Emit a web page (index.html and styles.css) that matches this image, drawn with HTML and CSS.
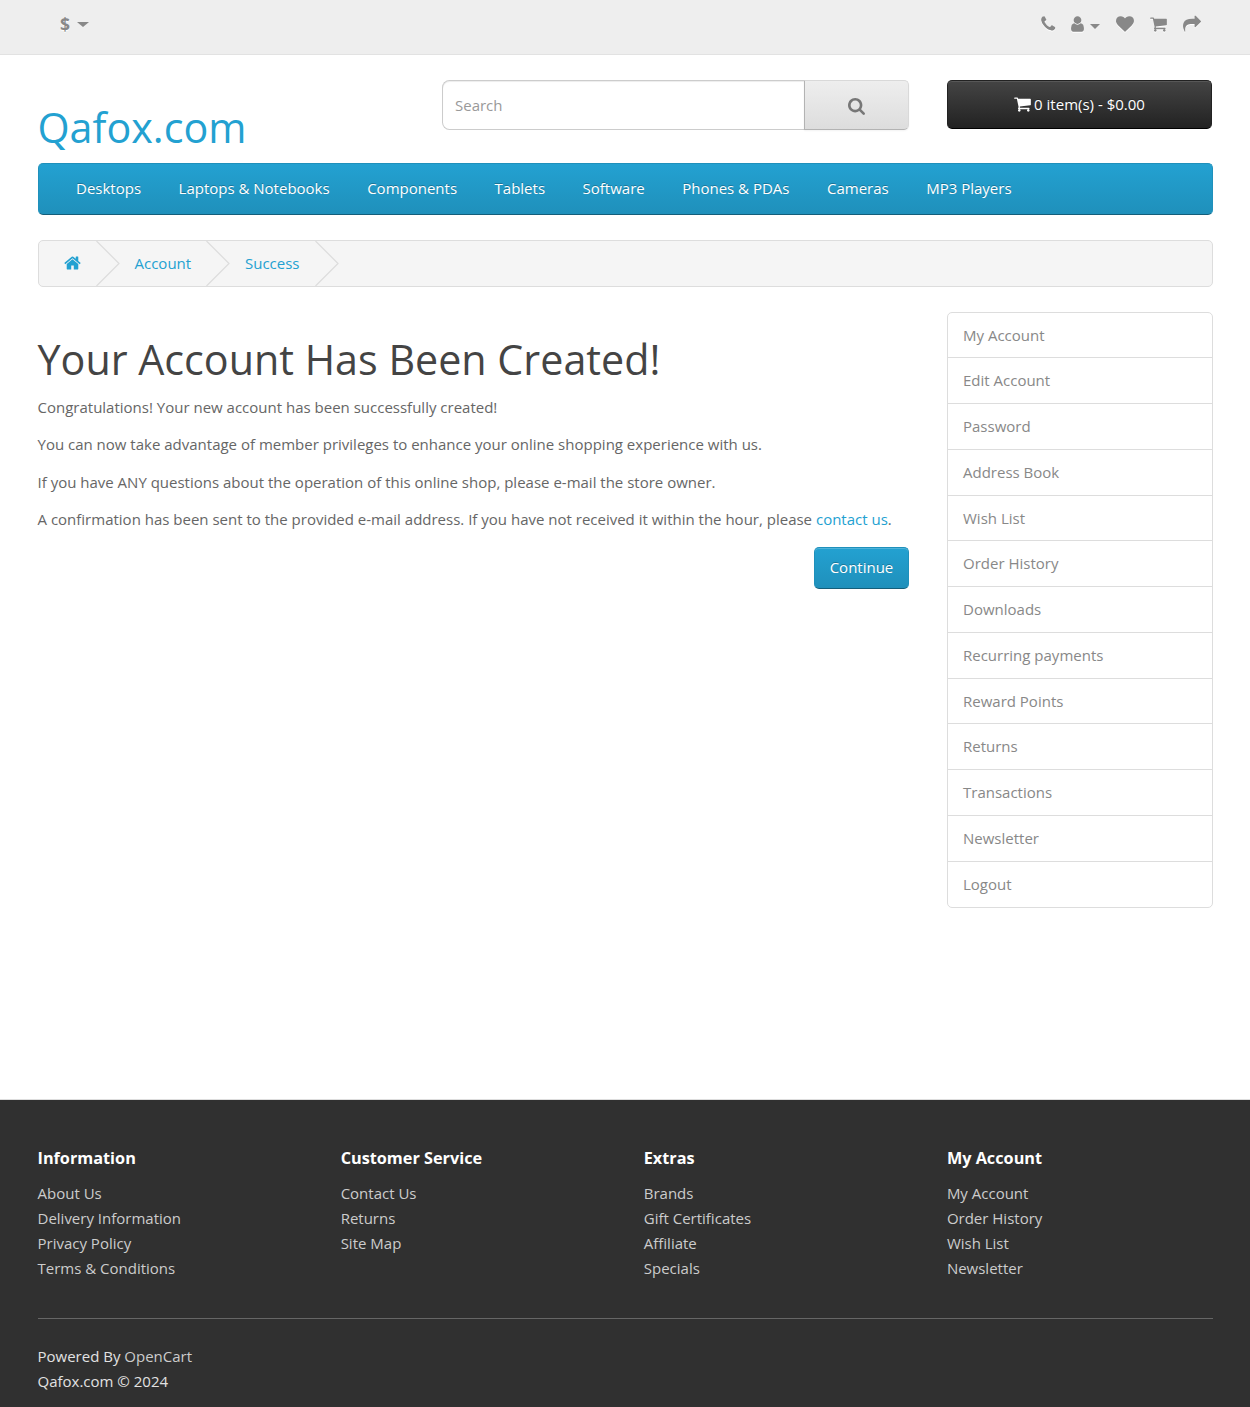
FILE: index.html
```html
<!DOCTYPE html>
<html lang="en">
<head>
<meta charset="utf-8">
<title>Your Account Has Been Created!</title>
<link rel="stylesheet" href="styles.css">
</head>
<body>
<svg class="sprite" aria-hidden="true">
  <symbol id="phone" viewBox="192 0 1408 1792"><path d="M1600 1240q0 27-10 70.5t-21 68.5q-21 50-122 106-94 51-186 51-27 0-52.5-3.5t-57.5-12.5-47.500-14.500-55.500-20.500-49-18q-98-35-175-83-128-79-264.500-215.500t-215.500-264.500q-48-77-83-175-3-9-18-49t-20.500-55.500-14.500-47.500-12.500-57.500-3.500-52.500q0-92 51-186 56-101 106-122 25-11 68.500-21t70.500-10q14 0 21 3 18 6 53 76 11 19 30 54t35 63.500 31 53.500q3 4 17.500 25t21.500 35.500 7 28.500q0 20-28.500 50t-62 55-62 53-28.500 46q0 9 5 22.500t8.500 20.500 14 24 11.500 19q76 137 174 235t235 174q2 1 19 11.500t24 14 20.500 8.500 22.500 5q18 0 46-28.500t53-62 55-62 50-28.500q14 0 28.500 7t35.500 21.500 25 17.500q25 15 53.500 31t63.500 35 54 30q70 35 76 53 3 7 3 21z"/></symbol>
  <symbol id="user" viewBox="256 0 1280 1792"><path d="M1536 1399q0 109-62.500 187t-150.500 78h-854q-88 0-150.500-78t-62.500-187q0-85 8.500-160.500t31.500-152 58.500-131 94-89 134.500-34.500q131 128 313 128t313-128q76 0 134.500 34.500t94 89 58.500 131 31.500 152 8.500 160.500zm-256-887q0 159-112.500 271.500t-271.500 112.500-271.500-112.500-112.500-271.500 112.500-271.500 271.500-112.500 271.500 112.500 112.500 271.500z"/></symbol>
  <symbol id="heart" viewBox="0 0 1792 1792"><path d="M896 1664q-26 0-44-18l-624-602q-10-8-27.500-26t-55.500-65.500-68-97.500-53.500-121-23.500-138q0-220 127-344t351-124q62 0 126.500 21.500t120 58 95.500 68.500 76 68q36-36 76-68t95.500-68.500 120-58 126.500-21.500q224 0 351 124t127 344q0 221-229 450l-623 600q-18 18-44 18z"/></symbol>
  <symbol id="cart" viewBox="64 0 1664 1792"><path d="M704 1536q0 52-38 90t-90 38-90-38-38-90 38-90 90-38 90 38 38 90zm896 0q0 52-38 90t-90 38-90-38-38-90 38-90 90-38 90 38 38 90zm128-1088v512q0 24-16.500 42.500t-40.500 21.500l-1044 122q13 60 13 70 0 16-24 64h920q26 0 45 19t19 45-19 45-45 19h-1024q-26 0-45-19t-19-45q0-11 8-31.500t16-36 21.500-40 15.500-29.500l-177-823h-204q-26 0-45-19t-19-45 19-45 45-19h256q16 0 28.500 6.500t19.500 15.500 13 24.500 8 26 5.500 29.500 4.500 26h1201q26 0 45 19t19 45z"/></symbol>
  <symbol id="share" viewBox="0 0 1792 1792"><path d="M1792 640q0 26-19 45l-512 512q-19 19-45 19t-45-19-19-45v-256h-224q-98 0-175.500 6t-154 21.500-133 42.500-105.500 69.500-80 101-48.500 138.500-17.500 181q0 55 5 123 0 6 2.500 23.500t2.500 26.500q0 15-8.500 25t-23.500 10q-16 0-28-17-7-9-13-22t-13.500-30-10.500-24q-127-285-127-451 0-199 53-333 162-403 875-403h224v-256q0-26 19-45t45-19 45 19l512 512q19 19 19 45z"/></symbol>
  <symbol id="search" viewBox="64 128 1664 1664"><path d="M1216 832q0-185-131.500-316.500t-316.500-131.500-316.500 131.500-131.500 316.500 131.500 316.500 316.500 131.500 316.500-131.500 131.500-316.500zm512 832q0 52-38 90t-90 38q-54 0-90-38l-343-342q-179 124-399 124-143 0-273.500-55.500t-225-150-150-225-55.500-273.500 55.500-273.500 150-225 225-150 273.500-55.500 273.500 55.500 225 150 150 225 55.500 273.500q0 220-124 399l343 343q37 37 37 90z"/></symbol>
  <symbol id="home" viewBox="64 0 1664 1792"><path d="M1472 992v480q0 26-19 45t-45 19h-384v-384h-256v384h-384q-26 0-45-19t-19-45v-480q0-1 .5-3t.5-3l575-474 575 474q1 2 1 6zm223-69l-62 74q-8 9-21 11h-3q-13 0-21-7l-692-577-692 577q-12 8-24 7-13-2-21-11l-62-74q-8-10-7-23.500t11-21.500l719-599q32-26 76-26t76 26l244 204v-195q0-14 9-23t23-9h192q14 0 23 9t9 23v408l219 182q10 8 11 21.500t-7 23.500z"/></symbol>
  <symbol id="chevron" viewBox="0 0 24 45"><path d="M.5 0L23 22.500L.5 45" fill="none" stroke="#ddd" stroke-width="1.200"/></symbol>
</svg>

<nav class="top">
  <a class="currency" href="#"><strong>$</strong><span class="caret"></span></a>
  <div class="top-links">
    <a href="#"><svg class="icon w-phone"><use href="#phone"/></svg></a>
    <a class="account" href="#"><svg class="icon w-user"><use href="#user"/></svg><span class="caret"></span></a>
    <a href="#"><svg class="icon"><use href="#heart"/></svg></a>
    <a href="#"><svg class="icon w-cart"><use href="#cart"/></svg></a>
    <a href="#"><svg class="icon"><use href="#share"/></svg></a>
  </div>
</nav>

<div class="container">
  <header class="header">
    <div class="logo"><a href="#">Qafox.com</a></div>
    <form class="search">
      <input type="text" placeholder="Search">
      <button type="button"><svg class="icon-search"><use href="#search"/></svg></button>
    </form>
    <button class="cart" type="button"><svg class="icon w-cart"><use href="#cart"/></svg><span>0 item(s) - $0.00</span></button>
  </header>

  <nav class="menu">
    <a href="#">Desktops</a>
    <a href="#">Laptops &amp; Notebooks</a>
    <a href="#">Components</a>
    <a href="#">Tablets</a>
    <a href="#">Software</a>
    <a href="#">Phones &amp; PDAs</a>
    <a href="#">Cameras</a>
    <a href="#">MP3 Players</a>
  </nav>

  <div class="breadcrumb">
    <a class="crumb-home" href="#"><svg class="icon w-cart"><use href="#home"/></svg></a>
    <svg class="chevron"><use href="#chevron"/></svg>
    <a class="crumb-account" href="#">Account</a>
    <svg class="chevron"><use href="#chevron"/></svg>
    <a class="crumb-success" href="#">Success</a>
    <svg class="chevron"><use href="#chevron"/></svg>
  </div>

  <div class="row">
    <main class="content">
      <h1>Your Account Has Been Created!</h1>
      <p>Congratulations! Your new account has been successfully created!</p>
      <p>You can now take advantage of member privileges to enhance your online shopping experience with us.</p>
      <p>If you have ANY questions about the operation of this online shop, please e-mail the store owner.</p>
      <p>A confirmation has been sent to the provided e-mail address. If you have not received it within the hour, please <a href="#">contact us</a>.</p>
      <div class="buttons"><a class="continue" href="#">Continue</a></div>
    </main>
    <aside class="side">
      <a href="#">My Account</a>
      <a href="#">Edit Account</a>
      <a href="#">Password</a>
      <a href="#">Address Book</a>
      <a href="#">Wish List</a>
      <a href="#">Order History</a>
      <a href="#">Downloads</a>
      <a href="#">Recurring payments</a>
      <a href="#">Reward Points</a>
      <a href="#">Returns</a>
      <a href="#">Transactions</a>
      <a href="#">Newsletter</a>
      <a href="#">Logout</a>
    </aside>
  </div>
</div>

<footer class="footer">
  <div class="footer-cols">
    <section><h5>Information</h5><a href="#">About Us</a><a href="#">Delivery Information</a><a href="#">Privacy Policy</a><a href="#">Terms &amp; Conditions</a></section>
    <section><h5>Customer Service</h5><a href="#">Contact Us</a><a href="#">Returns</a><a href="#">Site Map</a></section>
    <section><h5>Extras</h5><a href="#">Brands</a><a href="#">Gift Certificates</a><a href="#">Affiliate</a><a href="#">Specials</a></section>
    <section><h5>My Account</h5><a href="#">My Account</a><a href="#">Order History</a><a href="#">Wish List</a><a href="#">Newsletter</a></section>
  </div>
  <p class="powered">Powered By <a href="#">OpenCart</a><br>Qafox.com © 2024</p>
</footer>
</body>
</html>
```
FILE: styles.css
```css
* { box-sizing: border-box; }
body {
  margin: 0;
  min-height: 1407px;
  display: flex;
  flex-direction: column;
  background: #fff;
  color: #666;
  font: 400 15px/25px "Open Sans", "Noto Sans", sans-serif;
}
a { color: #23a1d1; text-decoration: none; }
.sprite { display: none; }
.icon { display: block; width: 18px; height: 18px; fill: currentColor; }
.w-phone { width: 14.500px; }
.w-user { width: 13px; }
.w-cart { width: 17px; }
.caret {
  border-top: 5px solid currentColor;
  border-left: 5px solid transparent;
  border-right: 5px solid transparent;
}

.top {
  height: 55px;
  flex: none;
  display: flex;
  justify-content: space-between;
  padding: 12px 49.500px 0 60px;
  background: #eee;
  border-bottom: 1px solid #e2e2e2;
}
.top a { color: #888; }
.currency { display: flex; align-items: center; gap: 7px; height: 25px; font-size: 17.500px; text-shadow: 0 1px 0 #fff; }
.currency .caret { border-left-width: 6px; border-right-width: 6px; }
.top-links { display: flex; align-items: flex-start; gap: 15.700px; padding-top: 3px; }
.top-links .icon { filter: drop-shadow(0 1px 0 #fff); }
.account { display: flex; align-items: center; gap: 6px; }
.account .caret { margin-top: 4px; }

.container { width: 1175px; margin: 25px auto 0; flex: 1; }
.header {
  display: grid;
  grid-template-columns: 366.500px 467px 265px;
  column-gap: 38px;
  align-items: start;
  height: 83px;
}
.logo { padding-top: 22px; font-size: 41.250px; line-height: 50px; }
.search { display: flex; height: 50px; }
.search input {
  flex: 1;
  min-width: 0;
  padding: 0 12px;
  border: 1px solid #ccc;
  border-right: 0;
  border-radius: 7.500px 0 0 7.500px;
  box-shadow: inset 0 1px 1px rgba(0, 0, 0, .075);
  font: inherit;
  color: #555;
}
.search input::placeholder { color: #999; }
.search button {
  width: 105px;
  display: flex;
  align-items: center;
  justify-content: center;
  padding: 3px 0 0;
  border: 1px solid;
  border-color: #d9d9d9 #d9d9d9 #b3b3b3 #b3b3b3;
  border-radius: 0 5px 5px 0;
  background: linear-gradient(#eee, #ddd);
  box-shadow: 0 1px 2px rgba(0, 0, 0, .05);
  color: #777;
}
.icon-search { width: 17px; height: 17px; fill: currentColor; }
.cart {
  height: 49px;
  display: flex;
  align-items: center;
  justify-content: center;
  gap: 3px;
  padding: 0;
  border: 1px solid;
  border-color: #222 #222 #000;
  border-radius: 5px;
  background: linear-gradient(#444, #222);
  box-shadow: inset 0 1px 0 rgba(255, 255, 255, .1);
  color: #fff;
  font: inherit;
  text-shadow: 0 -1px 0 rgba(0, 0, 0, .25);
}
.cart .icon { margin-top: -1px; }

.menu {
  display: flex;
  gap: 37.500px;
  height: 52px;
  padding: 12px 37.500px 0;
  border: 1px solid;
  border-color: #1f90bb #1f90bb #145e7a;
  border-radius: 5px;
  background: linear-gradient(#23a1d1, #1f90bb);
}
.menu a { color: #fff; text-shadow: 0 -1px 0 rgba(0, 0, 0, .25); }

.breadcrumb {
  display: flex;
  align-items: center;
  height: 47px;
  margin: 25px 0;
  padding-left: 25px;
  border: 1px solid #ddd;
  border-radius: 5px;
  background: #f5f5f5;
}
.chevron { width: 24px; height: 45px; }
.crumb-home { width: 32px; }
.crumb-home .icon { margin-top: -2px; }
.crumb-account { width: 86px; padding-left: 15px; }
.crumb-success { width: 85.500px; padding-left: 15.500px; }

.row { display: grid; grid-template-columns: 871.500px 266px; gap: 37.500px; align-items: start; }
.content h1 {
  margin: 22px 0 10.800px;
  color: #444;
  font-weight: 400;
  font-size: 41.250px;
  line-height: 50px;
}
.content p { margin: 0 0 12.500px; }
.buttons { display: flex; justify-content: flex-end; padding-top: 2.200px; }
.continue {
  width: 95px;
  height: 42px;
  padding-top: 7px;
  text-align: center;
  color: #fff;
  border: 1px solid;
  border-color: #1f90bb #1f90bb #145e7a;
  border-radius: 5px;
  background: linear-gradient(#23a1d1, #1f90bb);
  box-shadow: inset 0 1px 0 rgba(255, 255, 255, .2);
  text-shadow: 0 -1px 0 rgba(0, 0, 0, .25);
}
.side { border: 1px solid #ddd; border-radius: 5px; }
.side a { display: block; height: 45.770px; padding: 10px 15.500px 0; color: #888; border-bottom: 1px solid #ddd; }
.side a:first-child { height: 45.300px; }
.side a:last-child { height: 45.230px; border-bottom: 0; }

.footer {
  flex: none;
  height: 308px;
  padding: 37.500px 37.500px 0;
  background: #303030;
  border-top: 1px solid #ddd;
  color: #e2e2e2;
}
.footer-cols {
  display: grid;
  grid-template-columns: repeat(4, 1fr);
  gap: 37.500px;
  height: 181px;
  border-bottom: 1px solid #666;
}
.footer h5 { margin: 8px 0 10px; color: #fff; font-size: 16.250px; line-height: 25px; font-weight: 700; }
.footer a { color: #ccc; }
.footer section a { display: block; }
.powered { margin: 25px 0 0; }
```
